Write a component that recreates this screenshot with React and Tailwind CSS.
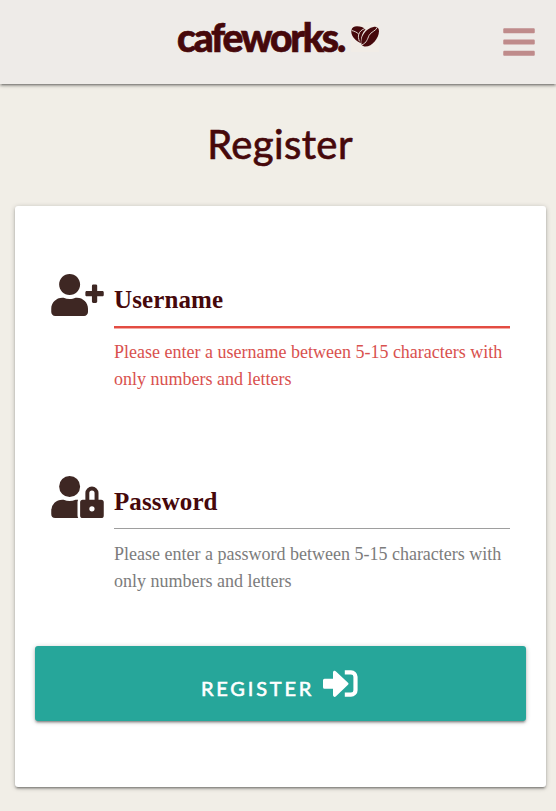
import { FaBars, FaUserPlus, FaUserLock } from "react-icons/fa";

const depth =
  "shadow-[0_2px_2px_0_rgba(0,0,0,0.2),0_3px_1px_-2px_rgba(0,0,0,0.16),0_1px_5px_0_rgba(0,0,0,0.24)]";

function Beans() {
  return (
    <svg viewBox="0 0 28 21" className="h-[21px] w-7" fill="#46080b">
      <path d="M.4 4.500C.8 1.500 3 .3 6 .3c3.500 0 6.500 1 8.500 3.200C11.500 6.500 9.500 11 9.800 17.200 4.800 15 -.6 9.500.4 4.500Z" />
      <path d="M10.600 18.500C8.600 11 15 2 22.500.9c3.500-.5 5.500 1 5.500 4.300 0 6.600-7 15.300-13.500 15.400-1.700 0-3.200-.7-3.900-2.100Z" />
      <path d="M.8 4.500c2.500.8 5 1.500 7 3.800M14 2.500C11 3.500 8.500 5.500 7.800 8.300c-.8 2.500-.3 4.200.6 7" fill="none" stroke="#efe9e2" strokeWidth=".9" />
      <path d="M26.500 1c-2 4.500-6.500 4.500-8.500 8.500-1.500 3.500-2.500 7.500-7 9.300" fill="none" stroke="#efe9e2" strokeWidth=".9" />
    </svg>
  );
}

function SignIn() {
  return (
    <svg viewBox="0 0 35 28" className="mt-6 h-7 w-[35px]" fill="white">
      <path d="M1.500 8.800H10V2.500C10 .8 11.800.2 13 1.400L25 12.800c.7.700.7 1.300 0 2L13 26.300c-1.200 1.200-3 .5-3-1.200v-6.400H1.500A1.500 1.500 0 0 1 0 17.200v-6.900a1.500 1.500 0 0 1 1.500-1.500Z" />
      <path d="M21.800 2.300H28a4.500 4.500 0 0 1 4.500 4.500v13.400a4.500 4.500 0 0 1-4.500 4.500h-6.200" fill="none" stroke="white" strokeWidth="4.200" strokeLinejoin="round" />
    </svg>
  );
}

function Field({ icon, label, helper, invalid }) {
  return (
    <div className="flex h-[202px] pl-9 pr-9">
      <div className="w-[63px] shrink-0 text-[42px] text-[#3e2723]">{icon}</div>
      <div className="flex-1">
        <div
          className={
            invalid
              ? "h-[54px] border-b-2 border-[#e34c42] pt-2 shadow-[0_1px_0_0_#f5aaa5]"
              : "h-[53px] border-b border-[#9e9e9e] pt-2"
          }
        >
          <label className="block text-[25px] leading-9 font-bold tracking-[0.1px] text-[#46080b]">{label}</label>
        </div>
        <p
          className={
            invalid
              ? "w-[396px] pt-[11px] text-[18px] leading-[27px] text-[#d9514e]"
              : "w-[396px] pt-3 text-[18px] leading-[27px] text-[#7c7c7c]"
          }
        >
          {helper}
        </p>
      </div>
    </div>
  );
}

export default function App() {
  return (
    <div className="h-[811px] w-[556px] overflow-hidden bg-[#f1eee7] font-['Liberation_Serif',serif]">
      <nav className={`relative flex h-[84px] items-start bg-[#eeebe8] ${depth}`}>
        <div className="ml-[177px] flex w-[326px] items-start text-[#46080b]">
          <span className="w-[174px] whitespace-nowrap pt-[14px] font-['Lato',sans-serif] text-[39px] leading-[46px] font-black tracking-[-2.2px] [-webkit-text-stroke:0.7px_#46080b]">
            cafeworks.
          </span>
          <span className="mt-[22px] bg-[#f1ece6] pt-[4px] pb-[5px]">
            <Beans />
          </span>
        </div>
        <FaBars className="mt-[23.5px] h-9 w-8 text-[#bf8b8b]" />
      </nav>
      <h1 className="h-[122px] pl-1 pt-[33px] text-center font-['Lato',sans-serif] text-[40px] leading-[54px] font-normal tracking-[0.4px] text-[#46080b] [-webkit-text-stroke:0.7px_#46080b]">
        Register
      </h1>
      <main className={`ml-[15px] h-[581px] w-[531px] rounded-[3px] bg-white pt-[68px] ${depth}`}>
        <Field
          icon={<FaUserPlus className="h-[42px] w-[53px]" />}
          label="Username"
          helper="Please enter a username between 5-15 characters with only numbers and letters"
          invalid
        />
        <Field
          icon={<FaUserLock className="h-[42px] w-[53px]" />}
          label="Password"
          helper="Please enter a password between 5-15 characters with only numbers and letters"
        />
        <button
          className={`-mt-8 ml-5 flex h-[75px] w-[491px] items-start rounded-[3px] bg-[#26a69a] pl-[166px] font-['Lato',sans-serif] text-white ${depth}`}
        >
          <span className="w-[122px] whitespace-nowrap pt-[29px] text-left text-[20px] leading-[27px] font-normal tracking-[2.8px] [-webkit-text-stroke:0.6px_white]">
            REGISTER
          </span>
          <SignIn />
        </button>
      </main>
    </div>
  );
}
